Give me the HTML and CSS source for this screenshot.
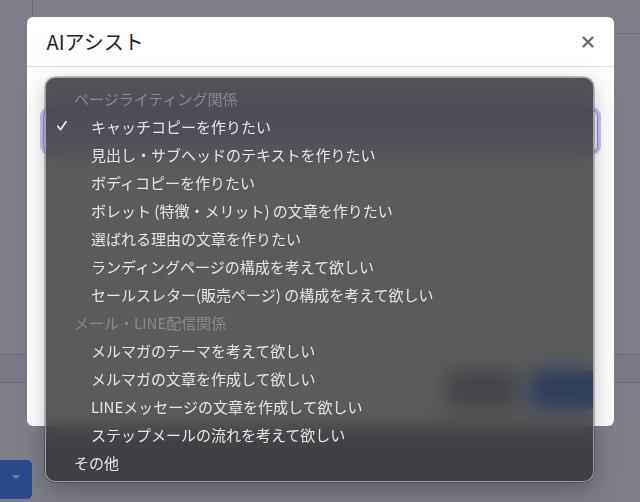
FILE: index.html
```html
<!DOCTYPE html>
<html lang="ja">
<head>
<meta charset="utf-8">
<title>AIアシスト</title>
<link rel="stylesheet" href="styles.css">
</head>
<body>
<div class="page">
  <div class="page-header">
    <div class="logo-cell"></div>
    <div class="title-cell"></div>
  </div>
  <div class="page-content"></div>
  <div class="page-band"></div>
  <div class="page-bottom">
    <div class="split-btn"><span class="caret"></span></div>
  </div>
</div>

<div class="overlay"></div>

<div class="modal-layer">
  <div class="modal">
    <div class="modal-header">
      <h2 class="modal-title">AIアシスト</h2>
      <button class="close-btn" aria-label="閉じる">
        <svg width="12" height="12" viewBox="0 0 12 12"><path d="M1.5 1.5 L10.5 10.5 M10.5 1.5 L1.5 10.5" stroke="#6b6b6b" stroke-width="2.4" stroke-linecap="round"/></svg>
      </button>
    </div>
    <div class="modal-body">
      <div class="select-box"></div>
    </div>
    <div class="modal-footer">
      <button class="btn btn-gray" aria-label="キャンセル"></button>
      <button class="btn btn-blue" aria-label="生成"></button>
    </div>
  </div>
</div>

<div class="menu">
  <div class="menu-group">ページライティング関係</div>
  <div class="menu-item"><span class="gutter"><svg width="10" height="10" viewBox="0 0 10 10"><path d="M0.8 5.2 L3.6 8.6 L9 0.8" fill="none" stroke="#f0f0f0" stroke-width="1.7" stroke-linecap="round" stroke-linejoin="round"/></svg></span>キャッチコピーを作りたい</div>
  <div class="menu-item"><span class="gutter"></span>見出し・サブヘッドのテキストを作りたい</div>
  <div class="menu-item"><span class="gutter"></span>ボディコピーを作りたい</div>
  <div class="menu-item"><span class="gutter"></span>ボレット (特徴・メリット) の文章を作りたい</div>
  <div class="menu-item"><span class="gutter"></span>選ばれる理由の文章を作りたい</div>
  <div class="menu-item"><span class="gutter"></span>ランディングページの構成を考えて欲しい</div>
  <div class="menu-item"><span class="gutter"></span>セールスレター(販売ページ) の構成を考えて欲しい</div>
  <div class="menu-group">メール・LINE配信関係</div>
  <div class="menu-item"><span class="gutter"></span>メルマガのテーマを考えて欲しい</div>
  <div class="menu-item"><span class="gutter"></span>メルマガの文章を作成して欲しい</div>
  <div class="menu-item"><span class="gutter"></span>LINEメッセージの文章を作成して欲しい</div>
  <div class="menu-item"><span class="gutter"></span>ステップメールの流れを考えて欲しい</div>
  <div class="menu-item"><span class="gutter short"></span>その他</div>
</div>
</body>
</html>
```

FILE: styles.css
```css
* {
  box-sizing: border-box;
  margin: 0;
  padding: 0;
}

html,
body {
  width: 640px;
  height: 502px;
  overflow: hidden;
}

body {
  font-family: "Noto Sans CJK JP", "Noto Sans", "Liberation Sans", sans-serif;
  background: #f5f5f9;
  position: relative;
}

/* ---------- page behind the dialog ---------- */
.page {
  display: flex;
  flex-direction: column;
  height: 502px;
}

.page-header {
  display: flex;
  height: 34px;
}

.logo-cell {
  width: 33px;
  border-right: 1px solid #d2d2da;
}

.title-cell {
  flex: 1;
  border-bottom: 1px solid #d2d2da;
}

.page-content {
  height: 320px;
}

.page-band {
  height: 29px;
  background: #ececf2;
  border-top: 1px solid #d2d2da;
  border-bottom: 1px solid #d2d2da;
}

.page-bottom {
  flex: 1;
  padding-top: 77px;
}

.split-btn {
  width: 32px;
  height: 39px;
  background: #4b8eff;
  border-radius: 0 5px 5px 0;
  display: flex;
  justify-content: center;
  padding-top: 15px;
}

.caret {
  width: 0;
  height: 0;
  border-left: 4px solid transparent;
  border-right: 4px solid transparent;
  border-top: 4px solid #e8eeff;
}

.overlay {
  position: fixed;
  inset: 0;
  background: rgba(8, 8, 24, 0.5);
}

/* ---------- dialog ---------- */
.modal-layer {
  position: fixed;
  inset: 0;
  display: flex;
  justify-content: center;
  align-items: flex-start;
  padding-top: 17px;
}

.modal {
  width: 587px;
  background: #ffffff;
  border-radius: 6px;
  display: flex;
  flex-direction: column;
}

.modal-header {
  height: 50px;
  display: flex;
  align-items: center;
  justify-content: space-between;
  padding: 0 20px;
  border-bottom: 1px solid #dcdcdf;
}

.modal-title {
  font-size: 20px;
  font-weight: 400;
  color: #222222;
}

.close-btn {
  border: none;
  background: none;
  width: 12px;
  height: 12px;
  display: flex;
}

.modal-body {
  height: 289px;
  padding: 43px 16px 16px;
  display: flex;
  flex-direction: column;
}

.select-box {
  height: 42px;
  border: 1px solid #8d84e6;
  border-radius: 6px;
  background: #f1f0fb;
  box-shadow: 0 0 0 3px rgba(150, 136, 240, 0.5);
}

.modal-footer {
  padding: 14px 20px 17px;
  display: flex;
  justify-content: flex-end;
  gap: 12px;
}

.btn {
  height: 39px;
  border: none;
  border-radius: 6px;
}

.btn-gray {
  width: 72px;
  background: #8a9097;
}

.btn-blue {
  width: 64px;
  background: #1f6cf5;
}

/* ---------- native-like popup menu ---------- */
.menu {
  position: absolute;
  left: 45px;
  top: 77px;
  width: 549px;
  padding: 6px 0 5px;
  border-radius: 10px;
  border: 1px solid rgba(175, 175, 180, 0.85);
  background:
    linear-gradient(to bottom, rgba(30, 30, 60, 0.18) 0, rgba(30, 30, 60, 0.16) 55px, rgba(30, 30, 60, 0) 90px),
    rgba(50, 50, 52, 0.8);
  backdrop-filter: blur(10px);
  -webkit-backdrop-filter: blur(10px);
  box-shadow: 0 0 0 0.5px rgba(0, 0, 0, 0.45), 0 8px 24px rgba(0, 0, 0, 0.25);
}

.menu-group,
.menu-item {
  height: 28px;
  display: flex;
  align-items: center;
  font-size: 15px;
  white-space: nowrap;
}

.menu-group {
  padding-left: 28px;
  color: #8a8a8c;
}

.menu-item {
  color: #e6e6e6;
}

.gutter {
  width: 45px;
  flex: none;
  display: flex;
  align-items: center;
  padding-left: 11px;
}

.gutter.short {
  width: 28px;
}
```
